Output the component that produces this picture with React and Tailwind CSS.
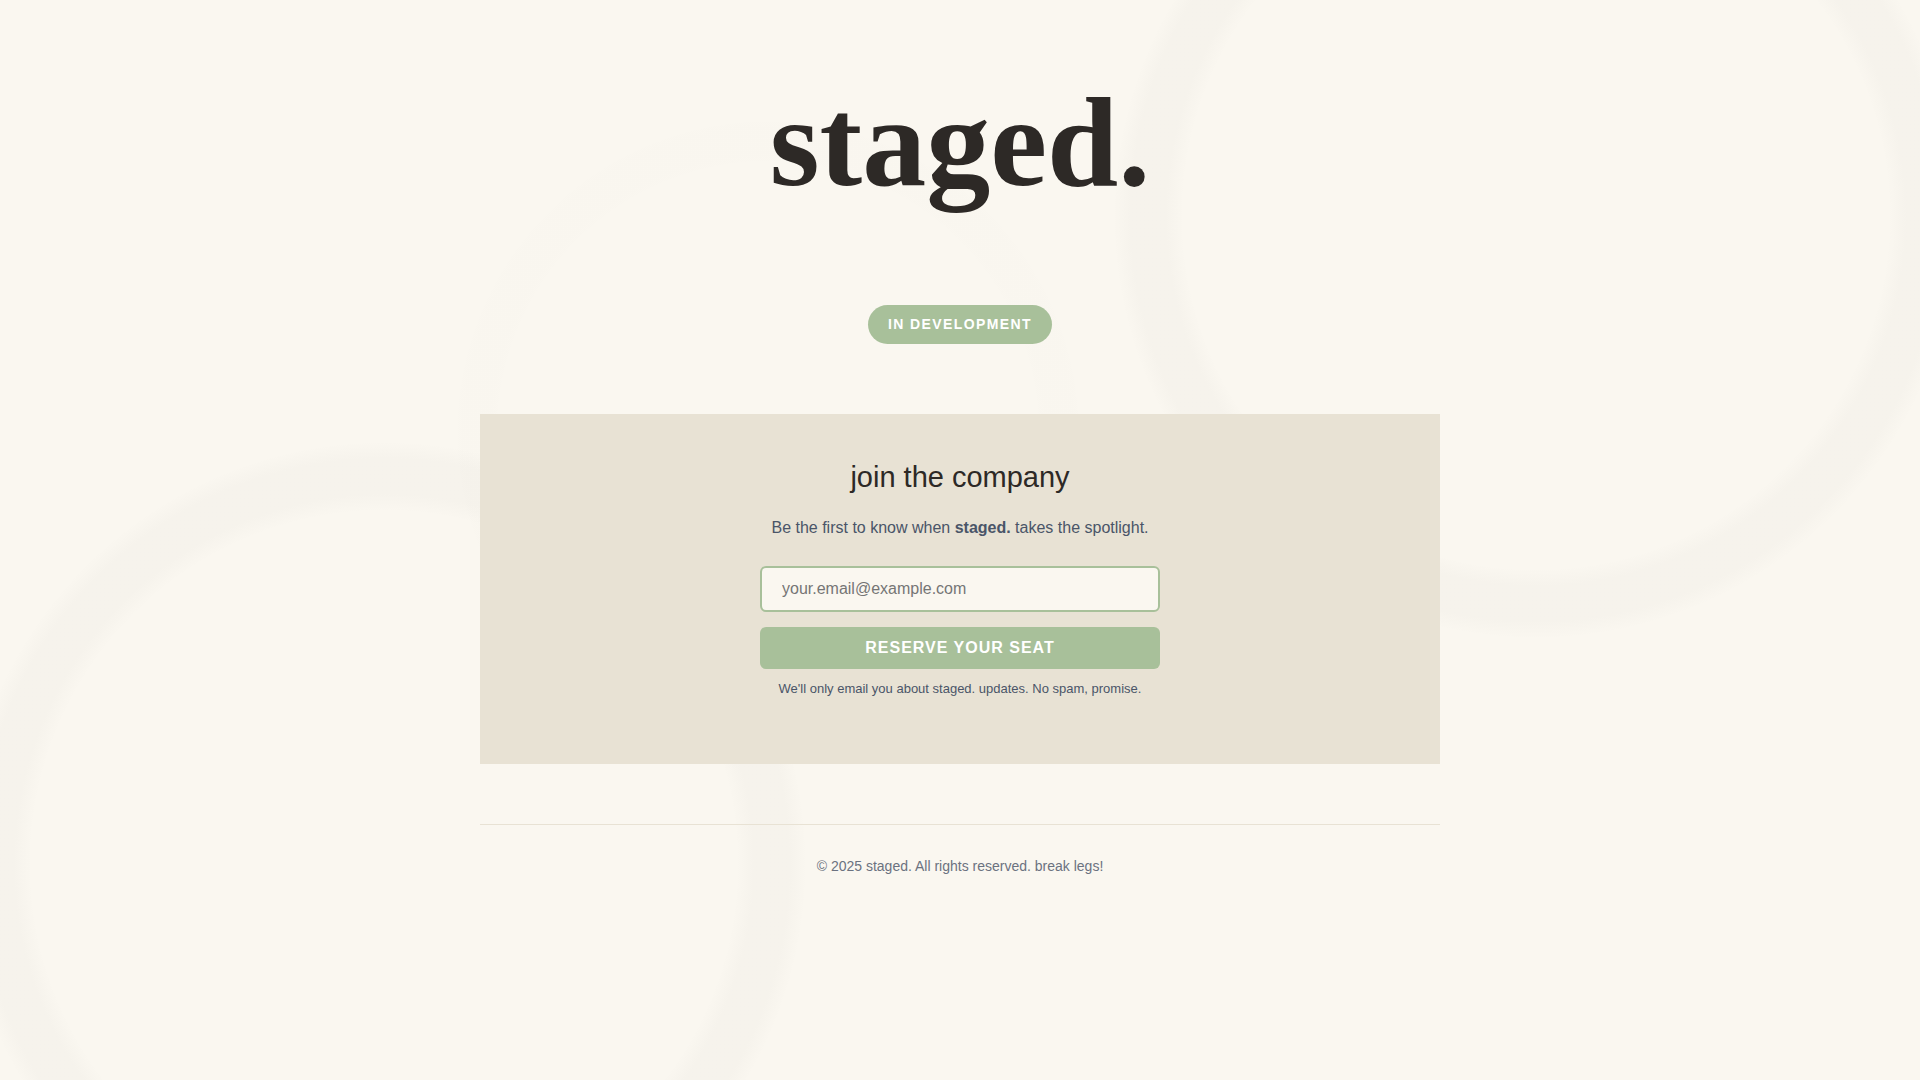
import React from "react";

const App = () => {
  return (
    <div className="min-h-screen bg-[#faf7f0] bg-[radial-gradient(circle_at_20%_80%,transparent_20%,rgba(44,40,37,0.02)_21%,rgba(44,40,37,0.02)_23%,transparent_24%),radial-gradient(circle_at_80%_20%,transparent_20%,rgba(44,40,37,0.02)_21%,rgba(44,40,37,0.02)_23%,transparent_24%),radial-gradient(circle_at_40%_40%,transparent_20%,rgba(44,40,37,0.005)_21%,rgba(44,40,37,0.005)_23%,transparent_24%)] px-4 font-['Liberation_Sans',Arial,sans-serif] text-[#2d2926]">
      <div className="mx-auto max-w-[960px] text-center">
        <header className="pt-16">
          <h1 className="font-['Liberation_Serif',serif] text-[128px] leading-[156px] font-bold">
            staged.
          </h1>
        </header>

        <div className="mt-[85px] flex justify-center">
          <span className="rounded-full bg-[#a8c09a] px-5 py-2 text-sm leading-[23px] font-bold tracking-widest text-white">
            IN DEVELOPMENT
          </span>
        </div>

        <main className="mt-[70px] bg-[#e8e2d4] px-8 py-10">
          <h2 className="text-[29px] leading-[46px]">join the company</h2>
          <p className="mt-[15px] text-base leading-[26px] text-[#4a5568]">
            Be the first to know when <strong>staged.</strong> takes the
            spotlight.
          </p>
          <form
            className="mx-auto mt-[25px] flex max-w-[400px] flex-col gap-[15px]"
            onSubmit={(e) => e.preventDefault()}
          >
            <input
              type="email"
              aria-label="Email address"
              placeholder="your.email@example.com"
              className="w-full rounded-md border-2 border-[#a8c09a] bg-[#faf7f0] px-5 py-3 text-base leading-[18px] placeholder:text-[#757575]"
            />
            <button
              type="submit"
              className="w-full rounded-md bg-[#a8c09a] py-3 text-base leading-[18px] font-bold tracking-[1px] text-white"
            >
              RESERVE YOUR SEAT
            </button>
          </form>
          <p className="mt-[10px] pb-[25px] text-[13px] leading-5 text-[#4a5568]">
            We'll only email you about staged. updates. No spam, promise.
          </p>
        </main>

        <footer className="mt-15 border-t border-[#e8e2d4] py-[30px] text-sm leading-[22px] text-[#6b7280]">
          <p>© 2025 staged. All rights reserved. break legs!</p>
        </footer>
      </div>
    </div>
  );
};

export default App;
